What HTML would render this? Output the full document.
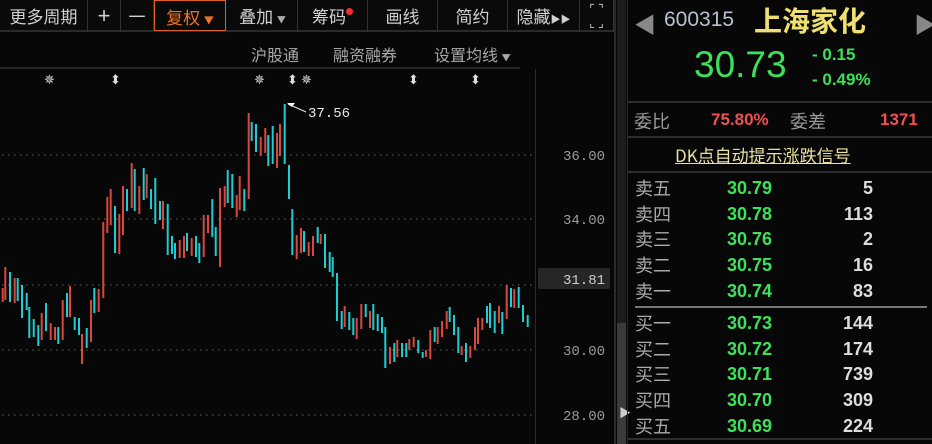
<!DOCTYPE html>
<html><head><meta charset="utf-8"><style>
*{margin:0;padding:0;box-sizing:border-box}
body{width:932px;height:444px;background:#070707;overflow:hidden;position:relative;font-family:"Liberation Sans","Noto Sans CJK SC",sans-serif;color:#c8c8c8}
.a{position:absolute;white-space:nowrap}
.tb{position:absolute;top:0;height:31px;border-right:1px solid #333;font-size:17px;color:#d0d0d0;text-align:center;line-height:31px}
.cn{font-family:"Noto Sans CJK SC",sans-serif}
.mono{font-family:"Liberation Mono","DejaVu Sans Mono",monospace}
.row{position:absolute;left:635px;width:240px;height:26px;font-size:18px;line-height:26px}
.row .n{position:absolute;left:0;color:#aaa;font-family:"Noto Sans CJK SC",sans-serif}
.row .p{position:absolute;left:92px;color:#3de05a;font-weight:bold}
.row .v{position:absolute;right:2px;color:#ddd;font-weight:bold}
</style></head><body>
<!-- toolbar -->
<div class="a" style="left:0;top:0;width:614px;height:32px;border-bottom:2px solid #2a2a2a;background:#0a0a0a"></div>
<div class="tb cn" style="left:0;width:88px">更多周期</div>
<div class="tb" style="left:88px;width:33px;font-size:22px">+</div>
<div class="tb cn" style="left:121px;width:33px">一</div>
<div class="tb cn" style="left:154px;width:72px;border:1px solid #e0621a;color:#f07028">复权 <span style="font-size:10px">▼</span></div>
<div class="tb cn" style="left:228px;width:70px">叠加 <span style="font-size:9px;color:#aaa">▼</span></div>
<div class="tb cn" style="left:298px;width:70px">筹码<span style="display:inline-block;width:7px;height:7px;border-radius:50%;background:#f03030;vertical-align:top;margin-top:8px"></span></div>
<div class="tb cn" style="left:368px;width:70px">画线</div>
<div class="tb cn" style="left:438px;width:70px">简约</div>
<div class="tb cn" style="left:508px;width:72px">隐藏<span style="font-size:10px">▶▶</span></div>
<div class="tb" style="left:580px;width:34px;font-size:12px;line-height:14px;padding-top:2px">⌜ ⌝<br>⌞ ⌟</div>
<!-- row2 -->
<div class="a cn" style="left:251px;top:42px;font-size:16px;color:#a8a8a8">沪股通</div>
<div class="a cn" style="left:333px;top:42px;font-size:16px;color:#a8a8a8">融资融券</div>
<div class="a cn" style="left:434px;top:42px;font-size:16px;color:#a8a8a8">设置均线 <span style="font-size:9px">▼</span></div>
<div class="a" style="left:0;top:67px;width:520px;height:2px;background:#262626"></div>
<!-- markers -->
<div class="a" style="left:44px;top:72px;font-size:13px;color:#ddd">✵</div>
<div class="a" style="left:110px;top:72px;font-size:13px;color:#ddd">⬍</div>
<div class="a" style="left:254px;top:72px;font-size:13px;color:#ddd">✵</div>
<div class="a" style="left:287px;top:72px;font-size:13px;color:#ddd">⬍</div>
<div class="a" style="left:301px;top:72px;font-size:13px;color:#ddd">✵</div>
<div class="a" style="left:408px;top:72px;font-size:13px;color:#ddd">⬍</div>
<div class="a" style="left:470px;top:72px;font-size:13px;color:#ddd">⬍</div>
<!-- vertical lines -->
<div class="a" style="left:535px;top:69px;width:1px;height:375px;background:#2a2a2a"></div>
<div class="a" style="left:614px;top:0;width:2px;height:444px;background:#2a2a2a"></div>
<div class="a" style="left:617px;top:0;width:9px;height:323px;background:#1c1c1c"></div>
<div class="a" style="left:617px;top:323px;width:9px;height:121px;background:#3a3a3a"></div>
<div class="a" style="left:619px;top:404px;font-size:12px;color:#ccc">▶</div>
<div class="a" style="left:627px;top:0;width:1px;height:444px;background:#2a2a2a"></div>
<!-- chart -->
<svg class="a" style="left:0;top:0" width="614" height="444">
<g stroke="#444" stroke-width="1.5" stroke-dasharray="1.5 4.5">
<line x1="2" y1="155" x2="536" y2="155"/><line x1="2" y1="219" x2="536" y2="219"/><line x1="2" y1="285" x2="536" y2="285"/><line x1="2" y1="350" x2="536" y2="350"/><line x1="2" y1="415" x2="536" y2="415"/>
</g>
<g font-family="Liberation Mono,monospace" font-size="14" fill="#9a9a9a">
<text x="563" y="160">36.00</text><text x="563" y="224">34.00</text><text x="563" y="355">30.00</text><text x="563" y="420">28.00</text>
</g>
<rect x="538" y="268" width="72" height="21" rx="2" fill="#262626"/>
<text x="563" y="284" font-family="Liberation Mono,monospace" font-size="14" fill="#ccc">31.81</text>
<text x="308" y="117" font-family="Liberation Mono,monospace" font-size="14" fill="#e8e8e8">37.56</text>
<path d="M288 104 L306 112" stroke="#ddd" stroke-width="1.2"/><path d="M287 103 L295 103 L292 107Z" fill="#fff"/>
<g id="bars"></g>
</svg>
<!-- right panel -->
<div class="a" style="left:634px;top:8px;font-size:22px;color:#888">◀</div>
<div class="a" style="left:914px;top:8px;font-size:22px;color:#888">▶</div>
<div class="a" style="left:664px;top:8px;font-size:21px;color:#b8c0d0">600315</div>
<div class="a cn" style="left:754px;top:0px;font-size:28px;color:#f0e070;font-weight:bold">上海家化</div>
<div class="a" style="left:694px;top:44px;font-size:37px;color:#3de05a">30.73</div>
<div class="a" style="left:812px;top:45px;font-size:17px;color:#3de05a;font-weight:bold">- 0.15</div>
<div class="a" style="left:812px;top:70px;font-size:17px;color:#3de05a;font-weight:bold">- 0.49%</div>
<div class="a" style="left:628px;top:101px;width:304px;height:2px;background:#2e2e2e"></div>
<div class="a cn" style="left:634px;top:108px;font-size:18px;color:#999">委比</div>
<div class="a" style="left:711px;top:110px;font-size:17px;color:#f05050;font-weight:bold">75.80%</div>
<div class="a cn" style="left:790px;top:108px;font-size:18px;color:#999">委差</div>
<div class="a" style="left:880px;top:110px;font-size:17px;color:#f05050;font-weight:bold">1371</div>
<div class="a" style="left:628px;top:136px;width:304px;height:2px;background:#2e2e2e"></div>
<div class="a cn" style="left:675px;top:142px;font-size:17px;color:#e8e0a0;text-decoration:underline">DK点自动提示涨跌信号</div>
<div class="a" style="left:628px;top:171px;width:304px;height:2px;background:#2e2e2e"></div>
<div class="row" style="top:175px"><span class="n">卖五</span><span class="p">30.79</span><span class="v">5</span></div>
<div class="row" style="top:201px"><span class="n">卖四</span><span class="p">30.78</span><span class="v">113</span></div>
<div class="row" style="top:226px"><span class="n">卖三</span><span class="p">30.76</span><span class="v">2</span></div>
<div class="row" style="top:252px"><span class="n">卖二</span><span class="p">30.75</span><span class="v">16</span></div>
<div class="row" style="top:278px"><span class="n">卖一</span><span class="p">30.74</span><span class="v">83</span></div>
<div class="a" style="left:635px;top:306px;width:292px;height:2px;background:#777"></div>
<div class="row" style="top:310px"><span class="n">买一</span><span class="p">30.73</span><span class="v">144</span></div>
<div class="row" style="top:336px"><span class="n">买二</span><span class="p">30.72</span><span class="v">174</span></div>
<div class="row" style="top:361px"><span class="n">买三</span><span class="p">30.71</span><span class="v">739</span></div>
<div class="row" style="top:387px"><span class="n">买四</span><span class="p">30.70</span><span class="v">309</span></div>
<div class="row" style="top:413px"><span class="n">买五</span><span class="p">30.69</span><span class="v">224</span></div>
<div class="a" style="left:628px;top:438px;width:304px;height:2px;background:#2e2e2e"></div>
<script>
var d=[[2.7,288,302,'r'],[5.3,267,300,'r'],[10,272,302,'c'],[14.7,278,303,'r'],[17.7,278,301,'c'],[22,285,318,'c'],[26.7,293,310,'c'],[29.3,307,338,'c'],[33.7,319,337,'c'],[38.3,325,346,'c'],[41.7,313,340,'r'],[46,303,331,'c'],[50.7,323,340,'r'],[55,327,340,'r'],[58.3,327,344,'c'],[62.7,300,340,'r'],[67,293,317,'c'],[70,286,317,'r'],[74.7,317,330,'c'],[79,318,335,'c'],[82,334,364,'r'],[86.7,328,348,'c'],[91,300,342,'r'],[94.3,288,313,'c'],[98.7,289,312,'r'],[103.3,222,298,'r'],[107.3,197,233,'r'],[110.7,189,225,'r'],[115,206,253,'c'],[119.3,214,254,'r'],[123,186,235,'r'],[127,189,211,'c'],[131.7,163,208,'r'],[134.7,169,211,'c'],[139.3,186,214,'r'],[143.7,168,200,'c'],[146.7,174,198,'r'],[151,189,209,'c'],[155.3,178,224,'c'],[160,201,220,'c'],[163,201,229,'r'],[167.7,204,255,'c'],[172,236,254,'c'],[175,243,259,'c'],[179.7,240,258,'r'],[184,236,258,'r'],[187,233,251,'c'],[191.7,238,256,'r'],[196,236,257,'c'],[199.3,243,263,'c'],[203.7,215,257,'r'],[208,215,233,'r'],[212.3,199,237,'c'],[215.7,227,256,'c'],[220,188,267,'r'],[224.7,186,207,'r'],[227.7,170,203,'c'],[232.3,174,208,'c'],[236.7,195,217,'r'],[239.7,176,210,'r'],[244.3,189,211,'c'],[248.7,113,199,'r'],[251.7,122,141,'c'],[256,124,152,'c'],[260.7,137,156,'r'],[265.3,128,153,'r'],[268.3,135,166,'c'],[272.7,126,164,'c'],[277,133,168,'r'],[280,124,156,'r'],[284.7,104,164,'c'],[289,165,199,'c'],[292.3,209,255,'c'],[296.7,235,259,'r'],[301,228,253,'r'],[304,231,252,'c'],[308.7,242,256,'r'],[313,236,256,'r'],[317.7,227,243,'c'],[320.7,234,244,'r'],[325,234,268,'c'],[329.7,252,272,'c'],[332.7,257,277,'c'],[337,273,321,'c'],[341.7,311,329,'c'],[344.7,306,327,'r'],[349.3,312,330,'c'],[353.3,318,335,'c'],[356.7,318,339,'r'],[361.3,304,329,'r'],[365.7,304,317,'c'],[370,311,328,'r'],[373.3,304,330,'c'],[377.7,314,331,'c'],[382,317,333,'c'],[385.3,327,368,'c'],[390,347,364,'r'],[394.3,343,362,'c'],[397.3,340,357,'r'],[402,343,357,'c'],[406.3,343,357,'c'],[409.3,339,350,'r'],[413.7,337,347,'r'],[418.3,340,353,'c'],[422.7,352,358,'c'],[426,350,357,'r'],[430.3,330,359,'r'],[434.7,327,342,'c'],[437.7,327,344,'r'],[442,321,337,'r'],[446.7,311,329,'r'],[449.7,307,322,'c'],[454,315,335,'c'],[458.3,327,353,'c'],[461.7,346,355,'r'],[466,343,362,'c'],[470.3,346,358,'r'],[475,327,350,'r'],[478,318,344,'r'],[482.3,318,330,'r'],[487,306,323,'c'],[490,303,328,'c'],[494.7,311,333,'c'],[499,306,323,'r'],[502.3,312,334,'c'],[506.7,285,319,'r'],[511,288,307,'c'],[514.3,289,308,'r'],[518.7,287,308,'c'],[523,305,322,'c'],[527.7,315,327,'c']];
var g=document.getElementById('bars'),s='';
d.forEach(function(b){s+='<rect x="'+(b[0]-1)+'" y="'+b[1]+'" width="2" height="'+(b[2]-b[1])+'" fill="'+(b[3]=='r'?'#d8483e':'#1ccdd4')+'"/>';});
g.innerHTML=s;
</script>
</body></html>
